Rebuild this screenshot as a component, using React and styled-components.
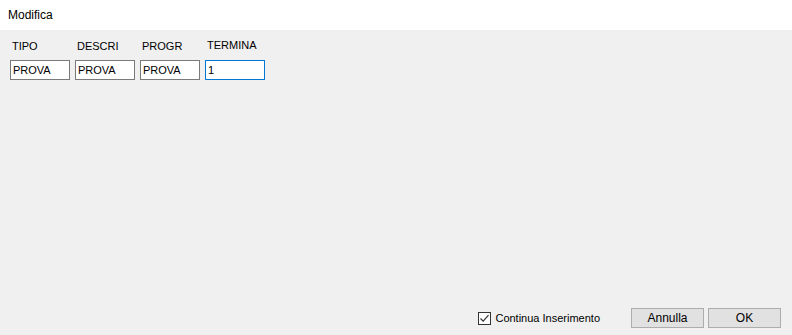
import React, { useState } from 'react';
import styled, { createGlobalStyle } from 'styled-components';

const GlobalStyle = createGlobalStyle`
  html, body, #root {
    margin: 0;
    padding: 0;
    height: 100%;
  }
  body {
    background: #f0f0f0;
    font-family: "Liberation Sans", Arial, sans-serif;
    font-size: 11px;
    color: #000;
  }
`;

const fields = [
  { name: 'TIPO', value: 'PROVA' },
  { name: 'DESCRI', value: 'PROVA' },
  { name: 'PROGR', value: 'PROVA' },
  { name: 'TERMINA', value: '1', focused: true },
];

const App = () => {
  const [values, setValues] = useState(fields.map((f) => f.value));
  const [continua, setContinua] = useState(true);

  return (
    <Window>
      <GlobalStyle />
      <TitleBar>Modifica</TitleBar>
      <Content>
        <FieldRow>
          {fields.map((f, i) => (
            <Field key={f.name}>
              <Label $raised={f.focused}>{f.name}</Label>
              <Input
                $focused={f.focused}
                value={values[i]}
                onChange={(e) => {
                  const next = [...values];
                  next[i] = e.target.value;
                  setValues(next);
                }}
              />
            </Field>
          ))}
        </FieldRow>
      </Content>
      <Footer>
        <CheckLabel onClick={() => setContinua(!continua)}>
          <CheckBox>
            {continua && (
              <svg width="11" height="11" viewBox="0 0 11 11">
                <path d="M1.5 5.5 L4.2 8.2 L9.5 2.2" fill="none" stroke="#333" strokeWidth="1.2" />
              </svg>
            )}
          </CheckBox>
          Continua Inserimento
        </CheckLabel>
        <Buttons>
          <Button>Annulla</Button>
          <Button>OK</Button>
        </Buttons>
      </Footer>
    </Window>
  );
};

export default App;

const Window = styled.div`
  display: flex;
  flex-direction: column;
  height: 100%;
`;

const TitleBar = styled.div`
  height: 30px;
  background: #fff;
  display: flex;
  align-items: center;
  padding-left: 8px;
  font-size: 12px;
  padding-bottom: 1px;
  box-sizing: border-box;
`;

const Content = styled.div`
  flex: 1;
  padding: 10px 10px 0;
`;

const FieldRow = styled.div`
  display: flex;
  gap: 5px;
`;

const Field = styled.div`
  display: flex;
  flex-direction: column;
`;

const Label = styled.span`
  padding-left: 2px;
  height: 13px;
  line-height: 13px;
  margin-bottom: 7px;
  position: relative;
  top: ${(p) => (p.$raised ? '-1px' : '0')};
`;

const Input = styled.input`
  width: 60px;
  height: 20px;
  box-sizing: border-box;
  border: 1px solid ${(p) => (p.$focused ? '#0078d7' : '#7a7a7a')};
  background: #fff;
  padding: 0 2px;
  margin: 0;
  font-family: "Liberation Sans", Arial, sans-serif;
  font-size: 11px;
  color: #000;
  outline: none;
`;

const Footer = styled.div`
  display: flex;
  justify-content: flex-end;
  align-items: center;
  padding: 0 11px 7px 0;
`;

const CheckLabel = styled.label`
  display: flex;
  align-items: center;
  gap: 4px;
  margin-right: 31px;
  cursor: default;
  user-select: none;
`;

const CheckBox = styled.span`
  width: 13px;
  height: 13px;
  box-sizing: border-box;
  border: 1px solid #333;
  background: #fff;
  display: flex;
  align-items: center;
  justify-content: center;
`;

const Buttons = styled.div`
  display: flex;
  gap: 4px;
`;

const Button = styled.button`
  width: 73px;
  height: 20px;
  box-sizing: border-box;
  border: 1px solid #adadad;
  background: #e1e1e1;
  font-family: "Liberation Sans", Arial, sans-serif;
  font-size: 12px;
  color: #000;
  padding: 0;
  margin: 0;

  &:hover {
    background: #e5f1fb;
    border-color: #0078d7;
  }
`;
